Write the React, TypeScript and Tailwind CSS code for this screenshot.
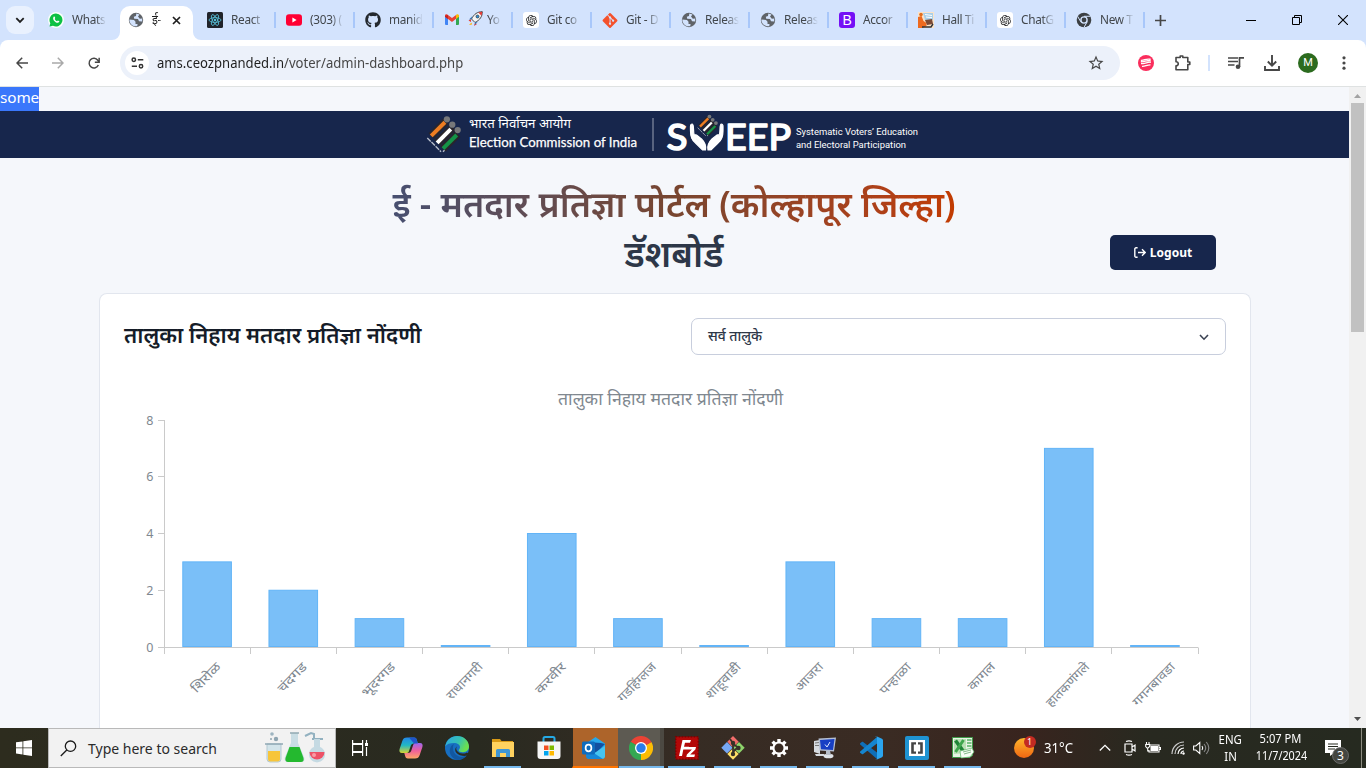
import React from "react";
import { FaGithub, FaGitAlt } from "react-icons/fa";
import { RiOpenaiFill } from "react-icons/ri";
import { MdStarOutline } from "react-icons/md";

const GlobeIcon = () => (
  <svg width="16" height="16" viewBox="0 0 16 16">
    <circle cx="8" cy="8" r="7.2" fill="#5f6368" />
    <path d="M1.3 7.5 L6 8 L7.5 9.8 L7.5 12 L9.6 12 L9.2 14.2 C6 14.8 1.5 13 1.3 7.5Z M8.3 1.5 L8 4 L5.8 4.8 L6.2 6.8 L10 7 L11 9.3 L14.2 9.6 L14.2 6.5 L11.8 6.8 L10 4.5 L11.5 2.5Z" fill="#d3e3fd" />
  </svg>
);

const ReactIcon = () => (
  <svg width="16" height="16" viewBox="0 0 16 16">
    <rect width="16" height="16" rx="1.5" fill="#20232a" />
    <g fill="none" stroke="#58c4dc" strokeWidth=".8">
      <ellipse cx="8" cy="8" rx="6" ry="2.4" />
      <ellipse cx="8" cy="8" rx="6" ry="2.4" transform="rotate(60 8 8)" />
      <ellipse cx="8" cy="8" rx="6" ry="2.4" transform="rotate(120 8 8)" />
    </g>
    <circle cx="8" cy="8" r="1.2" fill="#58c4dc" />
  </svg>
);

const YoutubeIcon = () => (
  <svg width="16" height="16" viewBox="0 0 16 16">
    <rect y="2.3" width="16" height="11.4" rx="3" fill="#ff0033" />
    <path d="M6.4 5.6v4.8L10.6 8z" fill="#fff" />
  </svg>
);

const GmailIcon = () => (
  <svg width="16" height="16" viewBox="0 0 16 16">
    <path d="M1 3.5h3V13H2a1 1 0 0 1-1-1z" fill="#4285f4" />
    <path d="M12 3.5h3V12a1 1 0 0 1-1 1h-2z" fill="#34a853" />
    <path d="M1 3.8C1 2.3 2.6 2 3.6 2.7L8 6l4.400-3.300v3.900L8 10 1 4.800z" fill="#ea4335" />
    <path d="M12 3l.4-.3C13.600 1.800 15 2.600 15 3.800v1L12 7z" fill="#fbbc04" />
    <path d="M1 3.800v1L4 7V3z" fill="#c5221f" />
  </svg>
);

const OpenAiIcon = () => (
  <span className="flex h-4 w-4 items-center justify-center rounded-[3px] bg-white text-[13px] text-[#202123]">
    <RiOpenaiFill />
  </span>
);

const BootstrapIcon = () => (
  <span className="flex h-4 w-4 items-center justify-center rounded-[3px] bg-[#7410f6] font-['Liberation_Sans'] text-[14px] leading-none text-white">
    B
  </span>
);

const TicketIcon = () => (
  <svg width="16" height="16" viewBox="0 0 16 16">
    <rect width="16" height="16" fill="#fbe3c8" />
    <path d="M5 1h10v7H7z" fill="#a9cfe8" />
    <path d="M7 2.500l7 1M8 5l6 .6" stroke="#fff" />
    <path d="M0 5l3.500-1 2 5 3 2v3l-4 2H0z" fill="#ee6a1f" />
    <circle cx="3" cy="2.600" r="1.800" fill="#e2701f" />
    <path d="M7 8l7-1 1 5-6 1z" fill="#7b4a35" />
    <path d="M4 15h9l2-3" stroke="#333" strokeWidth="1.400" fill="none" />
  </svg>
);

const ChromeGrayIcon = () => (
  <svg width="16" height="16" viewBox="0 0 16 16">
    <circle cx="8" cy="8" r="7.3" fill="#3c4043" />
    <circle cx="8" cy="8" r="3.1" fill="#3c4043" stroke="#d3e3fd" strokeWidth="1.4" />
    <path d="M8 4.300h6.500M4.800 9.800L1.600 4.300M11.200 9.800L8 15.300" stroke="#d3e3fd" strokeWidth="1" />
  </svg>
);

const tabs = [
  { icon: <ReactIcon />, text: "React" },
  { icon: <YoutubeIcon />, text: "(303) (" },
  { icon: <FaGithub className="text-[16px] text-[#24292f]" />, text: "manid" },
  { icon: <GmailIcon />, text: "Yo", rocket: true },
  { icon: <OpenAiIcon />, text: "Git co" },
  { icon: <FaGitAlt className="text-[17px] text-[#f4512c]" />, text: "Git - D" },
  { icon: <GlobeIcon />, text: "Releas" },
  { icon: <GlobeIcon />, text: "Releas" },
  { icon: <BootstrapIcon />, text: "Accor" },
  { icon: <TicketIcon />, text: "Hall Ti" },
  { icon: <OpenAiIcon />, text: "ChatG" },
  { icon: <ChromeGrayIcon />, text: "New T" },
];

const RocketIcon = () => (
  <svg width="15" height="15" viewBox="0 0 15 15" className="mr-1 shrink-0">
    <path d="M3 8l-2.500 1.500L3 11zM7 12l-1 3 3-2z" fill="#e53935" />
    <path d="M14.300.7C9.500.7 6 3 3.500 8L7 11.500C12 9 14.300 5.500 14.300.7z" fill="#f5f5f5" stroke="#222" strokeWidth=".8" />
    <path d="M14.300.7l-4 .8 3.200 3.200z" fill="#e53935" />
    <circle cx="9.500" cy="5.500" r="1.500" fill="#2f8fd8" stroke="#222" strokeWidth=".6" />
    <path d="M3.500 11.500L1 14l3-.6z" fill="#ffb300" />
    <path d="M3.600 8L1 8.500 4 5.500zM7 11.400L6.500 14l3-3z" fill="#2573b8" />
  </svg>
);

function TabStrip() {
  return (
    <div className="flex h-10 shrink-0 bg-[#d3e3fd] font-['Noto_Sans'] text-[11.8px] tracking-[-0.3px] text-[#41464b]">
      <div className="ml-1.5 mt-1.5 flex h-7 w-7 items-center justify-center rounded-[9px] bg-[#e9f1fe]">
        <svg width="10" height="7" viewBox="0 0 10 7">
          <path d="M1.300 1.200L5 4.900 8.700 1.200" fill="none" stroke="#1f1f1f" strokeWidth="1.800" />
        </svg>
      </div>
      <div className="ml-[14px] flex h-10 w-[64px] items-center gap-2">
        <span className="flex h-4 w-4 shrink-0 items-center justify-center rounded-full bg-[#f8fffa]">
          <svg width="14" height="14" viewBox="0 0 14 14">
            <path d="M7 .5a6.500 6.500 0 1 1-3 12.300L.5 13.500l.8-3.300A6.500 6.500 0 0 1 7 .5z" fill="#0cc143" />
            <path d="M4.500 4c.8-.9 1.300-.3 1.700 1l-.5.9c.6 1.200 1.300 1.800 2.400 2.300l.8-.8c1.500.6 1.800.9 1.200 1.700C8 11.500 2.800 7 4.500 4z" fill="#fff" />
          </svg>
        </span>
        <span className="w-[34px] whitespace-nowrap [mask-image:linear-gradient(to_right,black_70%,transparent)]">Whats</span>
      </div>
      <div className="relative ml-2 mt-1.5 flex h-[34px] w-[73px] items-start rounded-t-[10px] bg-white pl-2 pt-1.5">
        <svg className="absolute -left-2 bottom-0" width="8" height="8"><path d="M8 0v8H0a8 8 0 0 0 8-8z" fill="#fff" /></svg>
        <svg className="absolute -right-2 bottom-0" width="8" height="8"><path d="M0 0v8h8a8 8 0 0 1-8-8z" fill="#fff" /></svg>
        <GlobeIcon />
        <span className="ml-2 w-3 whitespace-nowrap text-[12px] leading-4 text-[#1f1f1f] [mask-image:linear-gradient(to_right,black_50%,transparent)]">ई-</span>
        <svg className="ml-[8px] mt-[4px]" width="9" height="9" viewBox="0 0 9 9">
          <path d="M1 1l7 7M8 1L1 8" stroke="#1f1f1f" strokeWidth="1.700" />
        </svg>
      </div>
      <div className="ml-[3px] flex">
        {tabs.map((t, i) => (
          <div key={i} className="flex h-10 w-[79px] shrink-0 items-center pl-[11px]">
            <span className="flex w-4 shrink-0 justify-center">{t.icon}</span>
            <span className="ml-2 flex w-[35px] whitespace-nowrap [mask-image:linear-gradient(to_right,black_60%,transparent_97%)]">
              {t.rocket && <RocketIcon />}
              {t.text}
            </span>
            <span className="-mr-px ml-auto h-4 w-[2px] shrink-0 bg-[#a8c7fa]" />
          </div>
        ))}
      </div>
      <div className="flex h-10 flex-1 items-center pl-[11px]">
        <svg width="11" height="11" viewBox="0 0 11 11"><path d="M5.500 0v11M0 5.500h11" stroke="#474747" strokeWidth="1.700" /></svg>
        <svg className="ml-auto mr-9" width="10" height="10"><path d="M0 5.500h10" stroke="#000" /></svg>
        <svg className="mr-9" width="10" height="10" viewBox="0 0 10 10" fill="none" stroke="#000">
          <path d="M.5 2.500h7v7h-7zM2.500 2.500v-2h7v7h-2" />
        </svg>
        <svg className="mr-[18px]" width="10" height="10" viewBox="0 0 10 10"><path d="M0 0l10 10M10 0L0 10" stroke="#000" strokeWidth="1.100" /></svg>
      </div>
    </div>
  );
}

function Toolbar() {
  return (
    <div className="h-[47px] shrink-0 bg-[#d3e3fd]">
      <div className="flex h-[47px] items-center rounded-t-[8px] border-b border-[#dfe2e2] bg-white">
        <svg className="ml-4" width="12" height="12" viewBox="0 0 12 12" fill="none" stroke="#474747" strokeWidth="1.500"><path d="M12 6H1M6.200.8L1 6l5.200 5.200" /></svg>
        <svg className="ml-6" width="12" height="12" viewBox="0 0 12 12" fill="none" stroke="#a9a9a9" strokeWidth="1.500"><path d="M0 6h11M5.800.8L11 6l-5.200 5.200" /></svg>
        <svg className="ml-[24px]" width="12" height="13" viewBox="0 0 13 13" fill="none" stroke="#474747" strokeWidth="1.600"><path d="M11.200 8.200A5.200 5.200 0 1 1 10.600 3L12 4.600M12.100.3v4.800H7.400" /></svg>
        <div className="ml-[20px] flex h-[34px] w-[1000px] shrink-0 items-center rounded-full bg-[#ecf1fa] pl-[5px]">
          <span className="flex h-6 w-6 items-center justify-center rounded-full bg-white">
            <svg width="13" height="12" viewBox="0 0 13 12" fill="none" stroke="#333" strokeWidth="1.500">
              <circle cx="2.800" cy="2.700" r="1.700" /><path d="M6.800 2.700h5.500M.8 9.300h5.200" /><circle cx="10" cy="9.300" r="1.700" />
            </svg>
          </span>
          <span className="ml-2 origin-left scale-x-[.97] whitespace-nowrap font-['Noto_Sans'] text-[13.500px] text-[#474747]">
            <span className="text-[#1f1f1f]">ams.ceozpnanded.in</span>/voter/admin-dashboard.php
          </span>
          <MdStarOutline className="ml-auto mr-[15px] text-[18px] text-[#474747]" />
        </div>
        <svg className="ml-[18px]" width="16" height="16" viewBox="0 0 16 16">
          <circle cx="8" cy="8" r="8" fill="#fa2d5c" />
          <path d="M3.500 6.800V5.300c3.500 0 3.500-1.600 8.500-1.100v1.300c-4 0-5 1.300-8.500 1.300zM3 8.700c4 0 5-1.500 10-1.500M4 11.400c3.500.2 4.500-1.700 8.500-1.600" fill="none" stroke="#fff" strokeWidth="1.300" />
        </svg>
        <svg className="ml-[20px]" width="18" height="18" viewBox="0 0 18 18" fill="none" stroke="#474747" strokeWidth="1.600" strokeLinejoin="round">
          <path d="M2 3.500h4.200V2h2.600v1.500h5V8h2v2.500h-2v5.200H2v-4c3 0 3-4 0-4z" />
        </svg>
        <span className="ml-[16px] h-4 w-[2px] bg-[#d3e3fd]" />
        <svg className="ml-[18px]" width="17" height="14" viewBox="0 0 17 14">
          <path d="M0 2h10M0 5.500h10M0 9h6.500" stroke="#474747" strokeWidth="1.700" />
          <path d="M11.500 11V1.800H16" fill="none" stroke="#474747" strokeWidth="1.700" /><circle cx="10" cy="10.800" r="2.300" fill="#474747" />
        </svg>
        <svg className="ml-[19px]" width="16" height="16" viewBox="0 0 16 16" fill="none" stroke="#474747" strokeWidth="1.900">
          <path d="M8 0v10.500M3.800 6.500L8 10.700l4.200-4.200M1 11v4h14v-4" />
        </svg>
        <span className="ml-[18px] flex h-5 w-5 items-center justify-center rounded-full bg-[#2c6b1f] font-['Roboto'] text-[11px] text-white">M</span>
        <svg className="ml-[24px]" width="4" height="14"><circle cx="2" cy="1.800" r="1.600" fill="#474747" /><circle cx="2" cy="7" r="1.600" fill="#474747" /><circle cx="2" cy="12.200" r="1.600" fill="#474747" /></svg>
      </div>
    </div>
  );
}

const Ballots = () => (
  <g>
    <path d="M-13 3L1 17 M3 17L18 2" stroke="#b6bdcb" strokeWidth="1.400" strokeDasharray="5 1" transform="translate(-2 0)" />
    <g strokeLinecap="butt">
      <path d="M-11 1L4-14" stroke="#29252b" strokeWidth="8" /><path d="M-5 8L11-8" stroke="#29252b" strokeWidth="8" /><path d="M1 14L16-1" stroke="#29252b" strokeWidth="8" />
      <path d="M-11 1L3-13" stroke="#ee7d22" strokeWidth="4" /><path d="M-5 8L9-6" stroke="#fff" strokeWidth="4" /><path d="M1 14L15 0" stroke="#159447" strokeWidth="4" />
    </g>
    <circle cx="5" cy="-16" r="3.200" fill="#77787a" /><circle cx="10.500" cy="-10.500" r="3.200" fill="#77787a" /><circle cx="16" cy="-5" r="3.200" fill="#77787a" />
  </g>
);

function Banner() {
  return (
    <div className="flex h-[47px] shrink-0 justify-center bg-[#17264c]">
      <svg width="501" height="47" viewBox="424 111 501 47">
        <g transform="translate(442 135) scale(.98)"><Ballots /></g>
        <g fill="#fff">
          <text x="469" y="128" fontFamily="Noto Sans, sans-serif" fontSize="12.500" textLength="102" lengthAdjust="spacingAndGlyphs">भारत निर्वाचन आयोग</text>
          <text x="469" y="146.500" fontFamily="Lato" fontSize="13.800" stroke="#fff" strokeWidth=".25" textLength="168" lengthAdjust="spacingAndGlyphs">Election Commission of India</text>
          <text x="796" y="134.500" fontFamily="Roboto" fontSize="9.500" textLength="122" lengthAdjust="spacingAndGlyphs">Systematic Voters’ Education</text>
          <text x="796" y="147.500" fontFamily="Roboto" fontSize="9.500" textLength="110" lengthAdjust="spacingAndGlyphs">and Electoral Participation</text>
          <g fontFamily="Lato" fontSize="36" stroke="#fff" strokeWidth="1.600" strokeLinejoin="round" strokeLinecap="round">
            <text x="666.500" y="149.500" textLength="21" lengthAdjust="spacingAndGlyphs">S</text>
            <text x="725" y="149.500" textLength="66" lengthAdjust="spacingAndGlyphs">EEP</text>
          </g>
        </g>
        <path d="M653 118v33" stroke="#6f7990" strokeWidth="1.500" />
        <path d="M692 124c-2 0-1.500 3-1.500 7 0 6 1 9 5 12l7 7h3c1-5-1-8-4-11l-5-4c-2-1-3 1-1 3l4 4c-5-4-6-7-6-13 0-3 0-5-1.500-5z M721.500 124c2 0 1.500 3 1.500 7 0 6-1 9-5 12l-7 7h-3c-1-5 1-8 4-11l5-4c2-1 3 1 1 3l-4 4c5-4 6-7 6-13 0-3 0-5 1.500-5z" fill="#fff" stroke="#fff" strokeWidth="1.200" />
        <g transform="translate(706.500 126) scale(.59)"><Ballots /></g>
      </svg>
    </div>
  );
}

const data = [
  { name: "शिरोळ", value: 3, len: 36 },
  { name: "चंदगड", value: 2, len: 36 },
  { name: "भूदरगड", value: 1, len: 42 },
  { name: "राधानगरी", value: 0, len: 46 },
  { name: "करवीर", value: 4, len: 38 },
  { name: "गडहिंग्लज", value: 1, len: 49 },
  { name: "शाहूवाडी", value: 0, len: 45 },
  { name: "आजरा", value: 3, len: 34 },
  { name: "पन्हाळा", value: 1, len: 39 },
  { name: "कागल", value: 1, len: 33 },
  { name: "हातकणंगले", value: 7, len: 56 },
  { name: "गगनबावडा", value: 0, len: 55 },
];

function Chart() {
  const step = 1034 / 12;
  return (
    <svg className="block" width="1102" height="343" viewBox="124 385 1102 343" fontFamily="Noto Sans, sans-serif" fill="#808890">
      <text x="558" y="405" fontSize="17.500" textLength="225" lengthAdjust="spacingAndGlyphs">तालुका निहाय मतदार प्रतिज्ञा नोंदणी</text>
      <path d="M164.500 420v234M158 647.500h1040.500" stroke="#cacaca" fill="none" />
      {[0, 2, 4, 6, 8].map((v) => {
        const y = Math.floor(647 - v * 28.375) + 0.5;
        return (
          <g key={v}>
            <path d={`M158 ${y}h6`} stroke="#cacaca" />
            <text x="153.500" y={y + 4} fontSize="12.500" textAnchor="end">{v}</text>
          </g>
        );
      })}
      {data.map((d, i) => {
        const x = 164.5 + step * i;
        const top = d.value === 0 ? 645 : 646.5 - d.value * 28.375;
        return (
          <g key={d.name}>
            <path d={`M${Math.round(x + step) - 0.5} 648v6`} stroke="#cacaca" />
            <rect x={x + 18.3} y={top + 0.5} width="48.6" height={646 - top} fill="#7abff8" stroke="#62b4f7" />
            <text transform={`translate(${x + 44.5} ${667.5 + d.len * 0.36}) rotate(-46)`} fontSize="12.500" textAnchor="middle" textLength={d.len} lengthAdjust="spacingAndGlyphs">{d.name}</text>
          </g>
        );
      })}
    </svg>
  );
}

function Page() {
  return (
    <div className="flex min-h-0 flex-1 overflow-hidden bg-[#f5f7fb]">
      <div className="flex w-[1349px] shrink-0 flex-col overflow-hidden">
        <div className="flex h-6 shrink-0">
          <span className="h-6 w-[39px] whitespace-nowrap bg-[#3a77fb] font-['Noto_Sans'] text-[15.3px] leading-[21px] tracking-[-0.1px] text-white">some</span>
        </div>
        <Banner />
        <div className="grid h-[135px] shrink-0 grid-cols-[392px_564px_1fr] font-['Noto_Sans'] font-semibold">
          <div />
          <div className="flex flex-col items-center pt-[20px]">
            <div className="bg-gradient-to-r from-[#474f70] via-[#78452f] to-[#c23b00] bg-clip-text text-[35.600px] leading-[50px] whitespace-nowrap text-transparent">ई - मतदार प्रतिज्ञा पोर्टल (कोल्हापूर जिल्हा)</div>
            <div className="text-[36.300px] leading-[50px] whitespace-nowrap text-[#2d3748]">डॅशबोर्ड</div>
          </div>
          <div className="flex flex-col pl-[154px] pt-[77px]">
            <div className="flex h-[35px] w-[106px] items-center justify-center gap-1 rounded-[5px] bg-[#17264c] text-[12px] font-bold text-white">
              <svg width="12" height="11" viewBox="0 0 12 11" fill="none" stroke="#fff" strokeWidth="1.400"><path d="M3.600.8H2A1.200 1.200 0 0 0 .8 2v7A1.200 1.200 0 0 0 2 10.200h1.600M4 5.500h7M8 2.300l3.200 3.200L8 8.700" /></svg>
              Logout
            </div>
          </div>
        </div>
        <div className="mx-[99px] w-[1152px] flex-1 rounded-t-lg border border-b-0 border-[#e2e6ee] bg-white pl-6 font-['Noto_Sans']">
          <div className="flex h-[91px] pt-6">
            <div className="w-[567px] whitespace-nowrap text-[22.100px] font-semibold leading-8 text-[#151c28]">तालुका निहाय मतदार प्रतिज्ञा नोंदणी</div>
            <div className="flex h-[37px] w-[535px] items-center justify-between rounded-[7px] border border-[#c8cedd] pl-4 pr-4 text-[14px] font-medium text-[#2d3748]">
              <span className="pb-[3px]">सर्व तालुके</span>
              <svg className="mt-0.5" width="10" height="7" viewBox="0 0 10 7"><path d="M1 1l4 4.200L9 1" fill="none" stroke="#3b4252" strokeWidth="1.600" /></svg>
            </div>
          </div>
          <Chart />
        </div>
      </div>
      <div className="flex w-[17px] shrink-0 flex-col items-center justify-between bg-[#f1f1f1]">
        <svg width="17" height="16"><path d="M5 11l3.500-4 3.500 4z" fill="#a3a3a3" /></svg>
        <div className="mb-auto h-[229px] w-[13px] bg-[#c1c1c1]" />
        <svg width="17" height="17"><path d="M5 6l3.500 4L12 6z" fill="#505050" /></svg>
      </div>
    </div>
  );
}

const icon24 = { width: 24, height: 24, viewBox: "0 0 24 24" };

const taskApps = [
  {
    running: false,
    icon: (
      <svg {...icon24}>
        <defs>
          <linearGradient id="cpa" x1="0" y1="0" x2="0" y2="1"><stop stopColor="#2387e8" /><stop offset=".5" stopColor="#20b8c4" /><stop offset="1" stopColor="#d6d232" /></linearGradient>
          <linearGradient id="cpb" x1="0" y1="0" x2="0" y2="1"><stop stopColor="#9b67f0" /><stop offset=".5" stopColor="#f0609a" /><stop offset="1" stopColor="#ffa765" /></linearGradient>
        </defs>
        <path d="M8 1.500h7c2 0 2.500 1 3 3l.8 3H15c-2 0-3 1-3.500 3L10 15c-.6 2-1.500 2-3.500 2H3c-2.500 0-3-2-2.400-4l2.700-8C4 2.500 5.500 1.500 8 1.500z" fill="url(#cpa)" />
        <path d="M16 22.500H9c-2 0-2.500-1-3-3L5.300 17H9c2 0 3-1 3.500-3L14 9.500c.6-2 1.500-2.500 3.500-2.500H21c2.500 0 3 2 2.400 4l-2.700 8c-.7 2.500-2.200 3.500-4.700 3.500z" fill="url(#cpb)" />
        <path d="M10 1.500h5c2 0 2.500 1 3 3l.8 3H15z" fill="#1f55c8" />
      </svg>
    ),
  },
  {
    running: false,
    icon: (
      <svg {...icon24}>
        <defs>
          <linearGradient id="eda" x1="0" y1="0" x2="1" y2=".4"><stop stopColor="#2da7e8" /><stop offset=".6" stopColor="#35c1b4" /><stop offset="1" stopColor="#6be04f" /></linearGradient>
        </defs>
        <circle cx="12" cy="12" r="12" fill="#176fc1" />
        <path d="M.2 10.500C1.500 3.500 6.500 0 12 0c7 0 12 5 12 10.500 0 4-3 5.700-6 5.700-2.800 0-4.300-1-4.300-2 0-.8 1.300-1.200 1.300-3 0-2.500-2.500-4.200-6-4.200C5 7 1.500 8 .2 10.500z" fill="url(#eda)" />
        <path d="M9 8c-2 3-1.500 10 5 12.500 3 1 6 0 8-1.500-2 3.500-6 5-10 5C8 23 3.500 18 5 13c.6-2.500 2-4.500 4-5z" fill="#1257a0" />
        <path d="M12 10.500c-1.800 2-.5 6.500 5.500 7 2.500.1 3.700-.5 4.500-1l1.300 1-1.300 2c-2 1-8 .5-10.500-2.500-2-2.500-1.500-5 .5-6.500z" fill="#2b2b21" />
      </svg>
    ),
  },
  {
    running: true,
    icon: (
      <svg {...icon24}>
        <path d="M1 3h8l1.500 2H22v15H1z" fill="#d99a16" /><path d="M1 6h22v15H1z" fill="#ffd25f" />
        <path d="M5 21v-6.500a1.500 1.500 0 0 1 1.500-1.500h11a1.500 1.500 0 0 1 1.500 1.500V21h-4v-4H9v4z" fill="#3f96d4" />
      </svg>
    ),
  },
  {
    running: false,
    icon: (
      <svg {...icon24}>
        <path d="M6.500 6V2.500A1.500 1.500 0 0 1 8 1h8a1.500 1.500 0 0 1 1.500 1.500V6" fill="none" stroke="#25a9e4" strokeWidth="2" />
        <path d="M.5 5.500h23V20a3 3 0 0 1-3 3h-17a3 3 0 0 1-3-3z" fill="#f6f6f6" />
        <path d="M7 9.500h4.500V14H7z" fill="#f25022" /><path d="M12.500 9.500H17V14h-4.500z" fill="#7fba00" /><path d="M7 15h4.500v4.500H7z" fill="#00a4ef" /><path d="M12.500 15H17v4.500h-4.500z" fill="#ffb900" />
      </svg>
    ),
  },
  {
    running: false,
    kind: "outlook",
    icon: (
      <svg {...icon24}>
        <path d="M4 7.500L13.500 1 23 7.500V21H4z" fill="#28a8ea" /><path d="M5 6l14 1 4 1-9 9-9-3z" fill="#1350a0" /><path d="M5 22l18-12v10a3 3 0 0 1-3 3H7z" fill="#45c4f0" /><path d="M4 12l17 11H7a3 3 0 0 1-3-3z" fill="#1688d8" />
        <rect x="0" y="5.500" width="13" height="13" rx="1.500" fill="#0f6cbd" />
        <ellipse cx="6.500" cy="12" rx="2.900" ry="3.300" fill="none" stroke="#fff" strokeWidth="1.700" />
      </svg>
    ),
  },
  {
    running: true,
    kind: "chrome",
    icon: (
      <svg {...icon24}>
        <path d="M12 12L1.600 6A12 12 0 0 1 22.400 6z" fill="#ea4335" /><path d="M12 12L22.400 6A12 12 0 0 1 12 24z" fill="#fbbc05" /><path d="M12 12v12A12 12 0 0 1 1.600 6z" fill="#34a853" />
        <path d="M1.600 6l5.200 9L12 12z" fill="#34a853" /><path d="M12 24l5.200-9L12 12z" fill="#fbbc05" />
        <path d="M12 6h10.400L12 12z" fill="#ea4335" />
        <circle cx="12" cy="12" r="6" fill="#fff" /><circle cx="12" cy="12" r="4.700" fill="#2b7de9" />
      </svg>
    ),
  },
  {
    running: true,
    icon: (
      <svg {...icon24}>
        <rect x=".7" y=".7" width="22.600" height="22.600" fill="#b30808" stroke="#7c0000" strokeWidth="1.400" strokeDasharray="1.500 1.500" />
        <path d="M4 20L7.500 4H16l-1 2.800H10l-1 4h5l-.7 2.700H8.300L7 20zM13.500 11H21l-.6 2.500-5.200 5H20l-.7 2.500h-8l.6-2.500 5-5h-4z" fill="#fff" />
      </svg>
    ),
  },
  {
    running: true,
    icon: (
      <svg {...icon24}>
        <path d="M12 0l5.700 5.700-5.700 5.700-5.700-5.700z" fill="#f16d6b" /><path d="M6 6l5.700 5.700L6 17.400.3 11.700z" fill="#76a7f5" /><path d="M18 6l5.700 5.700-5.700 5.700-5.700-5.700z" fill="#8ed46b" /><path d="M12 12.300l5.700 5.700-5.700 5.700L6.300 18z" fill="#ffdf68" />
        <path d="M9 3l3 4v13M12 8l6 4M12 16l4-4" stroke="#373128" strokeWidth="1.800" fill="none" /><circle cx="12" cy="7" r="2.200" fill="#373128" /><circle cx="17.500" cy="12" r="2.200" fill="#373128" /><circle cx="12" cy="18" r="2.200" fill="#373128" />
      </svg>
    ),
  },
  {
    running: true,
    icon: (
      <svg {...icon24}>
        <g stroke="#fff" strokeWidth="3.400"><path d="M12 3v18M3 12h18M5.600 5.600l12.800 12.800M18.400 5.600L5.600 18.400" /></g>
        <circle cx="12" cy="12" r="6.600" fill="#fff" /><circle cx="12" cy="12" r="4.500" fill="#382a22" />
      </svg>
    ),
  },
  {
    running: true,
    icon: (
      <svg {...icon24}>
        <path d="M1 5l6-1v14l-6-2z" fill="#d7dbe0" /><path d="M2 7l4-.5M2 9.500h4" stroke="#777" /><path d="M5.500 2.500l17.500-1-2 14-14.500-1z" fill="#b5bfd2" /><path d="M7 4l14.500-1-1.500 11-12-.8z" fill="#173fc4" />
        <path d="M12 8.500l2 2.500 3-5" stroke="#dfe8ff" strokeWidth="1" fill="none" /><path d="M2 18h9l1 2H3z" fill="#d7dbe0" /><ellipse cx="15.500" cy="20" rx="5" ry="2.300" fill="#dfe3e8" /><path d="M13 15h4l1 4h-5z" fill="#b8bec8" />
      </svg>
    ),
  },
  {
    running: true,
    icon: (
      <svg {...icon24}>
        <path d="M1.200 7.200l1.600-1.300c.4-.3.900-.3 1.300 0L18 16.500V23L1.200 8.600c-.4-.4-.4-1 0-1.400z" fill="#0f6fb8" />
        <path d="M1.200 16.800l1.600 1.300c.4.3.9.3 1.300 0L18 7.500V1L1.200 15.400c-.4.4-.4 1 0 1.400z" fill="#1585cf" />
        <path d="M17.400.2L23 2.800c.6.300 1 .9 1 1.500v15.400c0 .6-.4 1.200-1 1.500l-5.600 2.600c-.6.3-1.200.1-1.600-.3.700.7 2.200.2 2.200-1V1.500c0-1.200-1.500-1.700-2.200-1 .4-.4 1-.6 1.600-.3z" fill="#2ba5ef" />
      </svg>
    ),
  },
  {
    running: true,
    icon: (
      <svg {...icon24}>
        <rect width="24" height="24" rx="2" fill="#1f93d2" /><rect x="4" y="4" width="16" height="16" fill="#fff" />
        <path d="M11 6.200H6.200v11.600H11v-2.300H8.800v-7H11zM13 6.200h4.800v11.600H13v-2.300h2.200v-7H13z" fill="#454545" />
      </svg>
    ),
  },
  {
    running: true,
    icon: (
      <svg {...icon24}>
        <path d="M1.500 1.500h20v18l-3 2h-17z" fill="#e7f4e4" stroke="#3f9b48" strokeWidth="1" /><path d="M3 3h12v14L3 18z" fill="#b9e0b4" />
        <path d="M4.500 4.500l8 11" stroke="#1f8436" strokeWidth="3.600" /><path d="M12.500 4L4.500 16" stroke="#3fa64d" strokeWidth="3" /><path d="M16 4h4.500M16 7h4.500M16 10h4.500" stroke="#58b366" strokeWidth="1.500" /><path d="M9 15l12-3 2 4-4 5-9 1z" fill="#f7fff6" stroke="#60b56a" strokeWidth=".7" /><path d="M12 16l8-2M13 18l7-2" stroke="#83ba8a" />
      </svg>
    ),
  },
];

function Flasks() {
  return (
    <svg width="66" height="34" viewBox="0 0 66 34">
      <circle cx="10" cy="3" r="1.800" fill="#9db4c0" /><circle cx="14" cy="8" r="2.200" fill="#8fa5b1" /><circle cx="9" cy="8" r="1" fill="#8fa5b1" />
      <path d="M5 13h14v15a3 3 0 0 1-3 3H8a3 3 0 0 1-3-3z" fill="#d3e4ea" stroke="#b4c9d2" /><path d="M6 20h12v8a2.500 2.500 0 0 1-2.500 2.500h-7A2.500 2.500 0 0 1 6 28z" fill="#f7c53a" /><path d="M3 13h18" stroke="#90a9b5" strokeWidth="1.500" />
      <path d="M29 2h7v10l6 14c1 3 0 5-3 5H26c-3 0-4-2-3-5l6-14z" fill="#c9dde4" /><path d="M27.500 16h10l4 11c.6 2.500-.5 4-2.500 4H26c-2 0-3-1.500-2.500-4z" fill="#24b92f" /><path d="M28 2h9" stroke="#91a8b2" strokeWidth="1.500" />
      <path d="M50 8h11M43 5l6-3 3 1v5" stroke="#92b1c0" strokeWidth="2" fill="none" /><path d="M52 8h6v8a8 8 0 1 1-6 0z" fill="#c5dae3" /><path d="M47.500 21h15a7.500 7.500 0 1 1-15 0z" fill="#ed5267" /><circle cx="52" cy="24" r="2" fill="#fa9ba5" />
    </svg>
  );
}

function Taskbar() {
  return (
    <div className="flex h-10 shrink-0 bg-[linear-gradient(90deg,#2d2c1e_0%,#292a20_35%,#362c24_50%,#3a2b23_65%,#38241e_75%,#282920_84%,#262a20_100%)] font-['Noto_Sans'] text-white">
      <div className="flex w-12 shrink-0 items-center justify-center">
        <svg width="16" height="16" viewBox="0 0 16 16"><path d="M0 2.300L6.500 1.400v6.100H0zM7.300 1.300L16 0v7.500H7.300zM0 8.300h6.500v6.200L0 13.600zM7.300 8.300H16V16l-8.700-1.200z" fill="#fff" /></svg>
      </div>
      <div className="flex w-[288px] shrink-0 items-center border border-[#b9b9b9] bg-[#f2f2f2] pl-[11px] text-[14px] text-[#2b2b2b]">
        <svg width="17" height="17" viewBox="0 0 17 17" fill="none" stroke="#1b1b1b" strokeWidth="1.300"><circle cx="10.500" cy="6.200" r="5.200" /><path d="M6.800 10L.8 16" /></svg>
        <span className="ml-[11px] w-[150px] whitespace-nowrap">Type here to search</span>
        <span className="ml-auto mr-[7px]"><Flasks /></span>
      </div>
      <div className="flex w-[52px] shrink-0 items-center pl-4">
        <svg width="17" height="16" viewBox="0 0 17 16" fill="none" stroke="#fff" strokeWidth="1.200"><path d="M.6 0v3.500h10V0M.6 16v-3.500h10V16M.6 4.500h10v7H.6zM14.500 0v3M14.500 7v9" /><path d="M13 3h3v3h-3z" fill="#fff" stroke="none" /></svg>
      </div>
      {taskApps.map((a, i) => (
        <div
          key={i}
          className={
            a.kind === "outlook"
              ? "flex w-[46px] shrink-0 flex-col items-center border-b-2 border-l border-b-[#ff7400] border-l-transparent bg-[#ad642a] bg-clip-padding pr-1 pt-2"
              : a.kind === "chrome"
                ? "flex w-[46px] shrink-0 flex-col items-center border-l border-r-4 border-l-transparent border-r-[#4c4942] bg-[#5d5a52] pl-0.5 pt-2"
                : "flex w-[46px] shrink-0 flex-col items-center pr-px pt-2"
          }
        >
          <span className="flex h-[30px] items-start">{a.icon}</span>
          {a.running && <span className={a.kind === "chrome" ? "-ml-0.5 -mr-1 h-0.5 w-[45px] bg-[#76b9ed]" : "h-0.5 w-[37px] bg-[#76b9ed]"} />}
        </div>
      ))}
      <div className="relative ml-[28px] h-10 w-6 shrink-0">
        <svg className="absolute left-0 top-2" width="24" height="24">
          <defs><linearGradient id="sun" x1="0" y1="0" x2="0" y2="1"><stop stopColor="#ffb62c" /><stop offset="1" stopColor="#ef6612" /></linearGradient></defs>
          <circle cx="10" cy="12" r="10" fill="url(#sun)" /><circle cx="16" cy="6" r="6" fill="#c32b22" />
        </svg>
        <span className="absolute left-[13px] top-[7px] text-[9px] leading-[14px]">1</span>
      </div>
      <span className="ml-[6px] w-[50px] shrink-0 origin-left scale-x-[.94] whitespace-nowrap text-[14px] leading-10">31°C</span>
      <div className="ml-[5px] flex shrink-0 items-center">
        <svg width="12" height="8" viewBox="0 0 12 8"><path d="M.8 6.500L6 1.300l5.200 5.200" fill="none" stroke="#fff" strokeWidth="1.300" /></svg>
        <svg className="ml-[13px]" width="12" height="16" viewBox="0 0 12 16" fill="none" stroke="#fff" strokeWidth="1.200"><path d="M1 4h7v8H1zM8 7l3-2v6L8 9M2 1.500q3-1.200 6 0M2 14.500q3 1.200 6 0" /></svg>
        <svg className="ml-[9px]" width="16" height="12" viewBox="0 0 16 12" fill="none" stroke="#fff" strokeWidth="1.100"><path d="M5 3h9v7H4V8M14.500 5.500h1v2h-1M1.500 0v2M4 0v2M.7 2.500h4v2L3 6H2L.7 4.500zM2.700 6v3H4" /><path d="M6 4.500h6.500v4H6z" fill="#fff" /></svg>
        <svg className="ml-[10px]" width="14" height="14" viewBox="0 0 14 14" fill="none" strokeWidth="1.200"><path d="M1 13A12 12 0 0 1 13 1M4 13a9 9 0 0 1 9-9" stroke="#ccc" /><path d="M7 13a6 6 0 0 1 6-6M10 13a3 3 0 0 1 3-3" stroke="#fff" /><circle cx="12.500" cy="12.500" r="1.200" fill="#fff" /></svg>
        <svg className="ml-[8px]" width="17" height="14" viewBox="0 0 17 14" fill="none" stroke="#fff" strokeWidth="1.100"><path d="M.6 5h2.200l4-3.500v11l-4-3.500H.6zM9 5q1.500 2 0 4" /><path d="M11 3q3.500 4 0 8M13.300 1q5 6 0 12" stroke="#888" /></svg>
      </div>
      <div className="ml-[3px] flex w-[35px] shrink-0 flex-col items-center pt-[3px] text-[12px] leading-[17px]"><span className="scale-x-95">ENG</span><span className="scale-x-95">IN</span></div>
      <div className="flex w-[66px] shrink-0 flex-col items-center whitespace-nowrap pt-[2px] text-[12px] leading-[17px]"><span className="scale-x-[.93]">5:07 PM</span><span className="scale-x-[.9]">11/7/2024</span></div>
      <div className="relative ml-[11px] w-7 shrink-0">
        <svg className="absolute left-0 top-3" width="26" height="26"><path d="M0 0h16v13h-7l-4 3v-3H0z" fill="#fff" /><path d="M3 4h10M3 6.500h10M3 9h7" stroke="#262a20" /><circle cx="15.500" cy="15.500" r="8" fill="#444641" stroke="#777" strokeWidth=".8" /></svg>
        <span className="absolute left-3 top-[19px] text-[12px] leading-[17px]">3</span>
      </div>
      <div className="ml-auto w-[5px] shrink-0 border-l border-[#8b8b80]" />
    </div>
  );
}

export default function App() {
  return (
    <div className="flex h-[768px] w-[1366px] flex-col overflow-hidden">
      <TabStrip />
      <Toolbar />
      <Page />
      <Taskbar />
    </div>
  );
}
